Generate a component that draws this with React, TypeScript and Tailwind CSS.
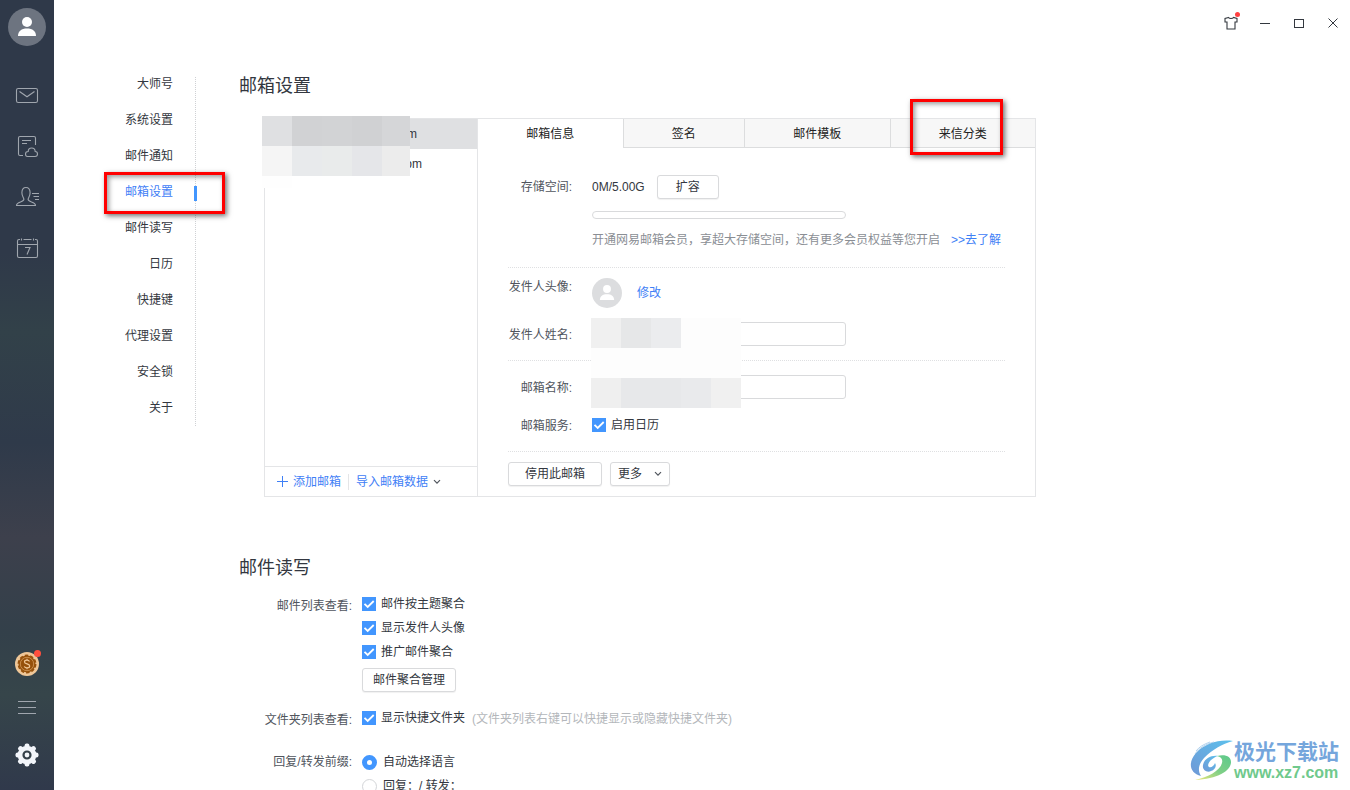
import React, { useState } from "react";

const navItems = ["大师号", "系统设置", "邮件通知", "邮箱设置", "邮件读写", "日历", "快捷键", "代理设置", "安全锁", "关于"];
const tabs = ["邮箱信息", "签名", "邮件模板", "来信分类"];

const buttonClass =
  "flex h-6 items-center justify-center rounded-[3px] border border-[#d9dadc] bg-white text-[#333740] shadow-[0_1px_1px_rgba(0,0,0,0.06)]";
const highlightClass =
  "pointer-events-none absolute z-10 border-[3px] border-[#ff0000] shadow-[2px_2px_5px_rgba(0,0,0,0.55),inset_2px_2px_5px_rgba(0,0,0,0.4)]";

function Check({ label }: { label: string }) {
  return (
    <label className="flex h-6 items-center gap-[5px] text-[#333740]">
      <span className="grid size-[14px]">
        <input
          type="checkbox"
          defaultChecked
          className="peer col-start-1 row-start-1 size-[14px] appearance-none border border-[#c8cacd] bg-white checked:border-[#4296fe] checked:bg-[#4296fe]"
        />
        <svg viewBox="0 0 14 14" className="pointer-events-none col-start-1 row-start-1 hidden size-[14px] peer-checked:block">
          <path d="M2.500 6.800 5.700 10 11.700 4" fill="none" stroke="#fff" strokeWidth="1.8" />
        </svg>
      </span>
      {label}
    </label>
  );
}

function Radio({ label, checked }: { label: string; checked?: boolean }) {
  return (
    <label className="flex h-6 items-center gap-[6px] text-[#333740]">
      <input
        type="radio"
        name="prefix"
        defaultChecked={checked}
        className="size-[15px] appearance-none rounded-full border border-[#d3d5d8] bg-white checked:border-[5px] checked:border-[#4296fe]"
      />
      {label}
    </label>
  );
}

function Chevron() {
  return (
    <svg viewBox="0 0 8 6" className="h-[6px] w-2" fill="none" stroke="#50555d" strokeWidth="1.2">
      <path d="M1 1.2 4 4.2 7 1.2" />
    </svg>
  );
}

function Mosaic({ cells, className }: { cells: string[]; className: string }) {
  return (
    <div
      aria-hidden="true"
      className={"pointer-events-none absolute grid grid-cols-[30px_30px_30px_30px_1fr] " + className}
    >
      {cells.map((c, i) => (
        <span key={i} style={{ backgroundColor: c }} />
      ))}
    </div>
  );
}

function Person({ className }: { className: string }) {
  return (
    <svg viewBox="0 0 38 38" className={className} fill="#fff">
      <circle cx="19" cy="14" r="5" />
      <path d="M10 28c0-5 3.500-7.500 9-7.500s9 2.500 9 7.500z" />
    </svg>
  );
}

function Sidebar() {
  return (
    <aside className="flex w-[54px] shrink-0 flex-col items-center bg-[linear-gradient(to_bottom,#2f3949_0%,#2f3949_32%,#324149_42%,#2f3a4a_56%,#3d404c_68%,#33404a_80%,#36454a_88%,#30394b_100%)]">
      <button aria-label="账号" className="mt-2 size-[38px] rounded-full bg-[#6d7480]">
        <Person className="size-[38px]" />
      </button>
      <nav className="mt-[38px] flex flex-col gap-[27px] text-[#a0a6ae]">
        <button aria-label="邮件">
          <svg viewBox="0 0 24 24" className="size-6" fill="none" stroke="currentColor" strokeWidth="1.1">
            <rect x="1.500" y="4.500" width="21" height="14" rx="1.800" />
            <path d="M4.500 7.500 12 12.800 19.500 7.500" />
          </svg>
        </button>
        <button aria-label="云附件">
          <svg viewBox="0 1 24 24" className="size-6" fill="none" stroke="currentColor" strokeWidth="1.1">
            <path d="M8 21.500H5A1.500 1.500 0 0 1 3.500 20V4A1.500 1.500 0 0 1 5 2.500h14A1.500 1.500 0 0 1 20.500 4v7M7 6.500h9M7 9.500h5" />
            <path d="M12.500 22.500h7.500c1.700 0 2.500-1.200 2.500-2.500s-1-2.400-2.300-2.500c-.1-2.100-1.600-3.500-3.500-3.500-2 0-3.500 1.500-3.500 3.500-1.600.1-2.700 1.100-2.700 2.500s.8 2.500 2 2.500z" />
          </svg>
        </button>
        <button aria-label="联系人">
          <svg viewBox="0 1 24 24" className="size-6" fill="none" stroke="currentColor" strokeWidth="1.1">
            <path d="M1.500 20.500h19c0-2-1.500-2.800-4-3.600-2.400-.8-3.400-1.200-3.400-2.600 0-1.600 2-2.600 2-6.500 0-3.700-1.600-5.300-4.100-5.300s-4.100 1.600-4.100 5.300c0 3.900 2 4.900 2 6.500 0 1.400-1 1.800-3.400 2.600-2.500.8-4 1.600-4 3.600z" />
            <path d="M17 8.500h7M18.500 11.500H24M20 14.500h4" />
          </svg>
        </button>
        <button aria-label="日历">
          <svg viewBox="0 1 24 24" className="size-6" fill="none" stroke="currentColor" strokeWidth="1.1">
            <path d="M5 3.500H4A1.500 1.500 0 0 0 2.500 5v15A1.500 1.500 0 0 0 4 21.500h17a1.500 1.500 0 0 0 1.500-1.500V5A1.500 1.500 0 0 0 21 3.500h-1M8.500 3.500h8M6.500 2.500v2M18.500 2.500v2M2.500 8.500h20" />
            <path d="M10 11.500h5L12 18.500" />
          </svg>
        </button>
      </nav>
      <div className="mt-auto flex flex-col items-center">
        <button aria-label="金币" className="relative size-[26px]">
          <svg viewBox="0 0 26 26" className="size-[26px]">
            <circle cx="13" cy="13" r="12" fill="#efc798" />
            <circle cx="13" cy="13" r="8.500" fill="#96510b" />
            <circle cx="13" cy="13" r="8.700" fill="none" stroke="#96510b" strokeWidth="1.500" strokeDasharray="3.500 2" />
            <circle cx="13" cy="13" r="6.700" fill="none" stroke="#d39a5c" strokeWidth=".8" />
            <path d="M15.500 10.500c-.5-1-1.400-1.300-2.500-1.300-1.500 0-2.500.7-2.500 1.800 0 2.500 5.200 1.400 5.200 4 0 1.200-1.100 1.900-2.700 1.900-1.300 0-2.300-.5-2.700-1.500M13 7.800v1.400M13 16.900v1.400" fill="none" stroke="#efc798" strokeWidth="1.200" />
          </svg>
          <span className="absolute -top-px -right-px size-[7px] rounded-full bg-[#ff4f3e]" />
        </button>
        <button aria-label="菜单" className="mt-6 flex w-[18px] flex-col gap-[5px] text-[#a0a6ae]">
          <span className="h-px w-full bg-current" />
          <span className="h-px w-full bg-current" />
          <span className="h-px w-full bg-current" />
        </button>
        <button aria-label="设置" className="mt-[29px] mb-[23px]">
          <svg viewBox="0 0 24 24" className="size-6">
            <g fill="#f2f5fa">
              <circle cx="12" cy="12" r="9.300" />
              {[0, 45, 90, 135, 180, 225, 270, 315].map((a) => (
                <rect key={a} x="9.600" y=".5" width="4.800" height="6" rx="2" transform={`rotate(${a} 12 12)`} />
              ))}
            </g>
            <circle cx="12" cy="12" r="3.500" fill="#f2f5fa" stroke="#344049" strokeWidth="2.200" />
          </svg>
        </button>
      </div>
    </aside>
  );
}

function Watermark() {
  return (
    <div className="pointer-events-none absolute right-[11px] bottom-[7px] flex items-center">
      <svg viewBox="0 0 44 44" className="size-11">
        <defs>
          <linearGradient id="swirlBlue" x1="1" y1="0" x2="0" y2="1">
            <stop offset="0" stopColor="#5cc0ec" />
            <stop offset="1" stopColor="#6f98d6" />
          </linearGradient>
          <linearGradient id="swirlGreen" x1="1" y1="0" x2="0" y2="1">
            <stop offset="0" stopColor="#5cc98c" />
            <stop offset=".5" stopColor="#7fcf86" />
            <stop offset="1" stopColor="#f0e87a" />
          </linearGradient>
        </defs>
        <path d="M43 2C30 0 15 4 6 14c-8 9-7 20 5 23-4-6-2-13 4-19C22 11 32 5 43 2z" fill="url(#swirlBlue)" />
        <path d="M24 3C16 5 9 9 5 15M20 3C14 5 9 8 6 12" fill="none" stroke="#9fc8ea" strokeWidth=".8" />
        <path d="M28 17c-7-1-14 3-15 9-1 5 4 8 8 6 4-1 6-5 4-8-1 3-4 5-6 4-3-2 2-9 9-11z" fill="url(#swirlBlue)" />
        <path d="M27 17c9-2 14 1 14 6 0 9-14 17-36 18 13-3 25-9 27-17 1-4-1-6-5-7z" fill="url(#swirlGreen)" />
      </svg>
      <div className="flex flex-col font-bold">
        <span className="text-[21px] leading-[24px] text-[#75a6dc]">极光下载站</span>
        <span className="text-[16px] leading-[18px] text-[#6fc98c]">www.xz7.com</span>
      </div>
    </div>
  );
}

export default function App() {
  const [tab, setTab] = useState(0);
  return (
    <div className="relative flex h-screen overflow-hidden bg-white font-['Liberation_Sans','Noto_Sans_CJK_SC',sans-serif] text-[12px] leading-[18px] text-[#50555d]">
      <Sidebar />
      <div className="flex min-w-0 flex-1 flex-col">
        <header className="flex h-[46px] shrink-0 items-center justify-end text-[#33383f]">
          <button aria-label="换肤" className="relative flex w-[34px] justify-center">
            <svg viewBox="0 0 14 14" className="size-[14px]" fill="none" stroke="currentColor" strokeWidth="1.1">
              <path d="M4.500 1.500 1 2.500v3.500h2v7h8V6h2V2.500l-3.500-1C8.500 2.800 5.500 2.800 4.500 1.500z" />
            </svg>
            <span className="absolute -top-[4px] right-[8px] size-[5px] rounded-full bg-[#ff4040]" />
          </button>
          <button aria-label="最小化" className="flex w-[34px] justify-center">
            <span className="h-px w-[10px] bg-current" />
          </button>
          <button aria-label="最大化" className="flex w-[34px] justify-center">
            <span className="h-[9px] w-[10px] border border-current" />
          </button>
          <button aria-label="关闭" className="flex w-[34px] justify-center">
            <svg viewBox="0 0 10 10" className="size-[10px]" fill="none" stroke="currentColor">
              <path d="M.5.5l9 9M9.500.5l-9 9" />
            </svg>
          </button>
        </header>

        <div className="flex min-h-0 flex-1 items-start overflow-y-auto [scrollbar-width:none]">
          <nav className="mt-[31px] w-[142px] shrink-0 border-r border-dotted border-[#cfd1d4] pb-[11px]">
            <ul className="flex flex-col gap-[22px]">
              {navItems.map((item, i) => (
                <li key={item} className="relative pr-[22px] text-right leading-[14px]">
                  <a href="#" className={i === 3 ? "text-[#3f80f6]" : "text-[#333740]"}>
                    {item}
                  </a>
                  {i === 3 && (
                    <>
                      <span className="absolute top-px -right-[2px] h-[15px] w-[3px] bg-[#4296fe]" />
                      <span className={highlightClass + " -top-[13px] -right-[30px] h-[42px] w-[121px]"} />
                    </>
                  )}
                </li>
              ))}
            </ul>
          </nav>

          <main className="min-w-0 flex-1 pt-7 pb-6 pl-[43px]">
            <h1 className="text-[18px] leading-6 text-[#333740]">邮箱设置</h1>
            <section className="relative mt-5 ml-[25px] flex max-w-[772px] border border-[#e4e5e7]">
              <div className="flex w-[213px] shrink-0 flex-col border-r border-[#e4e5e7] text-[#333740]">
                <ul className="flex-1 text-right leading-[30px]">
                  <li className="h-[30px] bg-[#dfe0e2] pr-[60px]">m</li>
                  <li className="h-[30px] pr-[55px]">om</li>
                </ul>
                <div className="flex h-[30px] items-center border-t border-[#e4e5e7] pl-3 text-[#3f80f6]">
                  <button className="flex items-center gap-[5px]">
                    <svg viewBox="0 0 11 11" className="size-[11px]" stroke="currentColor">
                      <path d="M5.500 0v11M0 5.500h11" />
                    </svg>
                    添加邮箱
                  </button>
                  <span className="mx-[7px] h-4 w-px bg-[#e4e5e7]" />
                  <button className="flex items-center gap-[5px]">
                    导入邮箱数据
                    <Chevron />
                  </button>
                </div>
              </div>

              <div className="min-w-0 flex-1">
                <div role="tablist" className="flex h-[29px]">
                  {tabs.map((t, i) => (
                    <button
                      key={t}
                      role="tab"
                      aria-selected={tab === i}
                      onClick={() => setTab(i)}
                      className={
                        "relative flex-auto px-12 text-[#222] " +
                        (i > 0 ? "border-l border-[#dcddde] " : "") +
                        (tab === i ? "bg-white" : "border-b border-b-[#dcddde] bg-[#f7f7f7] pt-px")
                      }
                    >
                      {t}
                      {i === 3 && <span className={highlightClass + " -top-[20px] left-[19px] h-[56px] w-[93px]"} />}
                    </button>
                  ))}
                </div>

                <div className="px-[30px] pt-[27px] pb-[10px]">
                  <div className="grid grid-cols-[64px_1fr] gap-x-5">
                    <span className="self-center text-right">存储空间:</span>
                    <div className="flex items-center gap-3 text-[#333740]">
                      0M/5.00G
                      <button className={buttonClass + " w-[62px]"}>扩容</button>
                    </div>
                    <div className="col-start-2 mt-3 h-2 max-w-[254px] rounded-full border border-[#d9dadc]" />
                    <p className="col-start-2 mt-3 whitespace-nowrap text-[#8a8e94]">
                      开通网易邮箱会员，享超大存储空间，还有更多会员权益等您开启
                      <a href="#" className="ml-[11px] text-[#3f80f6]">&gt;&gt;去了解</a>
                    </p>
                  </div>

                  <div className="mt-[18px] border-t border-dotted border-[#dfe0e2] pt-[10px]">
                    <div className="grid grid-cols-[64px_1fr] gap-x-5">
                      <span className="text-right">发件人头像:</span>
                      <div className="flex items-center gap-[15px]">
                        <span className="size-[30px] rounded-full bg-[#dcdddf]">
                          <Person className="size-[30px]" />
                        </span>
                        <a href="#" className="text-[#3f80f6]">修改</a>
                      </div>
                      <label htmlFor="sender" className="mt-4 self-center text-right">发件人姓名:</label>
                      <input id="sender" className="mt-[14px] h-6 w-full max-w-[254px] rounded-[3px] border border-[#d9dadc] px-2" />
                    </div>
                  </div>

                  <div className="mt-[14px] border-t border-dotted border-[#dfe0e2] pt-[14px]">
                    <div className="grid grid-cols-[64px_1fr] gap-x-5">
                      <label htmlFor="mailbox" className="mt-[2px] self-center text-right">邮箱名称:</label>
                      <input id="mailbox" className="h-6 w-full max-w-[254px] rounded-[3px] border border-[#d9dadc] px-2" />
                      <span className="mt-4 self-center text-right">邮箱服务:</span>
                      <div className="mt-[14px]">
                        <Check label="启用日历" />
                      </div>
                    </div>
                  </div>

                  <div className="mt-[14px] flex gap-2 border-t border-dotted border-[#dfe0e2] pt-[10px]">
                    <button className={buttonClass + " w-[94px]"}>停用此邮箱</button>
                    <button className={buttonClass + " w-[60px] gap-3"}>
                      更多
                      <Chevron />
                    </button>
                  </div>
                </div>
              </div>

              <Mosaic
                className="-top-[3px] -left-[3px] h-[72px] w-[148px] grid-rows-[30px_30px_12px]"
                cells={[
                  "#dfe0e2", "#d1d2d4", "#d2d3d5", "#d0d1d3", "#d5d6d8",
                  "#f5f5f5", "#e8eaec", "#e9ebeb", "#e5e6e9", "#ececec",
                  "#fefefe", "#ffffff", "#ffffff", "#ffffff", "#ffffff",
                ]}
              />
              <Mosaic
                className="top-[199px] left-[326px] h-[90px] w-[150px] grid-rows-3"
                cells={[
                  "#f0f0f0", "#e6e7e8", "#ebecee", "#fdfdfd", "#fdfdfd",
                  "#fdfdfd", "#fdfdfd", "#fdfdfd", "#fdfdfd", "#fdfdfd",
                  "#efefef", "#e7e8ea", "#e7e8ea", "#e9eaec", "#f0f0f0",
                ]}
              />
            </section>

            <h2 className="mt-[59px] text-[18px] leading-6 text-[#333740]">邮件读写</h2>
            <section className="mt-3 ml-[25px] grid grid-cols-[88px_1fr] gap-x-[10px] text-right">
              <span className="leading-7">邮件列表查看:</span>
              <div>
                <Check label="邮件按主题聚合" />
                <Check label="显示发件人头像" />
                <Check label="推广邮件聚合" />
                <button className={buttonClass + " mt-1 w-[94px]"}>邮件聚合管理</button>
              </div>
              <span className="mt-[14px] whitespace-nowrap leading-7">文件夹列表查看:</span>
              <div className="mt-[14px] flex items-start gap-[7px]">
                <Check label="显示快捷文件夹" />
                <span className="leading-[26px] text-[#b4b7bb]">(文件夹列表右键可以快捷显示或隐藏快捷文件夹)</span>
              </div>
              <span className="mt-4 leading-6">回复/转发前缀:</span>
              <div className="mt-4">
                <Radio label="自动选择语言" checked />
                <Radio label="回复：/ 转发：" />
              </div>
            </section>
          </main>
        </div>
      </div>
      <Watermark />
    </div>
  );
}
